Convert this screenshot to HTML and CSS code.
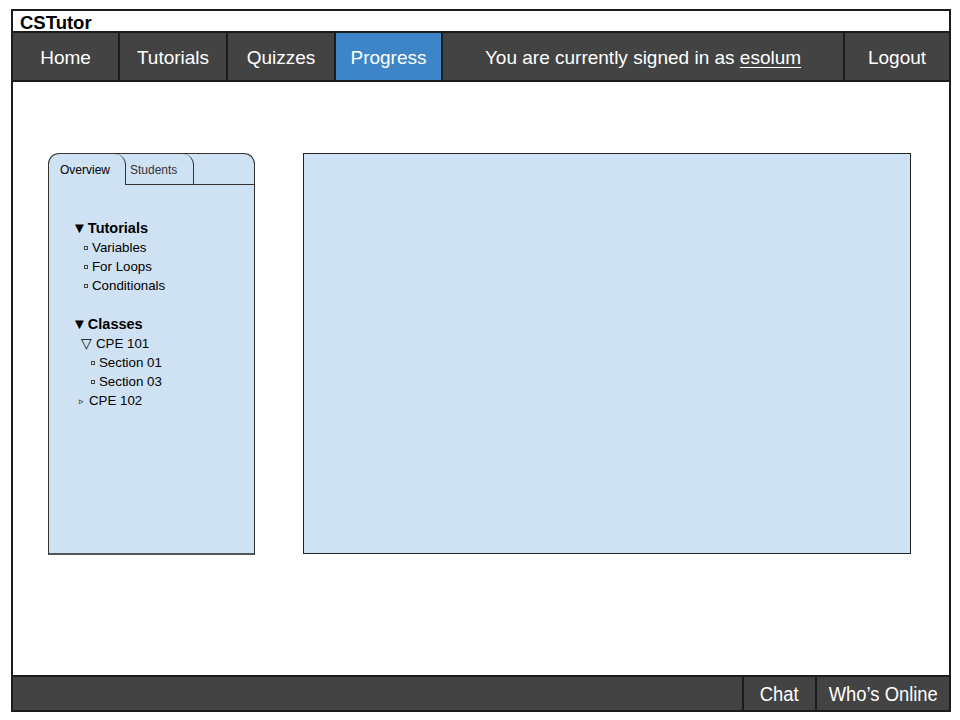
FILE: index.html
```html
<!DOCTYPE html>
<html lang="en">
<head>
    <meta charset="UTF-8">
    <title>CSTutor</title>
    <link rel="stylesheet" href="styles.css">
</head>
<body>
    <div class="frame">
        <div class="title">CSTutor</div>

        <div class="nav">
            <div class="nav-item nav-home">Home</div>
            <div class="nav-item nav-tut">Tutorials</div>
            <div class="nav-item nav-quiz">Quizzes</div>
            <div class="nav-item nav-prog active">Progress</div>
            <div class="nav-item nav-user">You are currently signed in as <u>esolum</u></div>
            <div class="nav-item nav-logout">Logout</div>
        </div>

        <div class="content">
            <div class="side-panel">
                <div class="tabs">
                    <div class="tab tab-active">Overview</div>
                    <div class="tab tab-other">Students</div>
                    <div class="tab-fill"></div>
                </div>

                <div class="tree">
                    <div class="tree-head"><span class="down">&#9660;</span>Tutorials</div>
                    <div class="leaf lvl1"><span class="sq"></span>Variables</div>
                    <div class="leaf lvl1"><span class="sq"></span>For Loops</div>
                    <div class="leaf lvl1"><span class="sq"></span>Conditionals</div>

                    <div class="tree-head head-gap"><span class="down">&#9660;</span>Classes</div>
                    <div class="node open"><span class="open-tri">&#9661;</span>CPE 101</div>
                    <div class="leaf lvl2"><span class="sq"></span>Section 01</div>
                    <div class="leaf lvl2"><span class="sq"></span>Section 03</div>
                    <div class="node closed"><span class="tri">&#9657;</span>CPE 102</div>
                </div>
            </div>

            <div class="main-panel"></div>
        </div>

        <div class="footer">
            <div class="foot-spacer"></div>
            <div class="foot-item foot-chat"><span class="narrow">Chat</span></div>
            <div class="foot-item foot-online"><span class="narrow">Who&rsquo;s Online</span></div>
        </div>
    </div>
</body>
</html>
```

FILE: styles.css
```css
* {
    margin: 0;
    padding: 0;
    box-sizing: border-box;
}

body {
    font-family: 'Liberation Sans', Arial, sans-serif;
    background: #fff;
    color: #000;
    width: 960px;
    height: 720px;
    overflow: hidden;
}

.frame {
    position: relative;
    margin: 9px 0 0 11px;
    width: 940px;
    height: 703px;
    border: 2px solid #1c1c1c;
    display: flex;
    flex-direction: column;
}

.title {
    height: 22px;
    padding-left: 7px;
    font-size: 18.5px;
    font-weight: bold;
    line-height: 23px;
    border-bottom: 2px solid #1c1c1c;
}

.nav {
    display: flex;
    height: 49px;
    background: #434343;
    border-bottom: 2px solid #1c1c1c;
}

.nav-item {
    color: #fff;
    font-size: 19px;
    line-height: 50px;
    text-align: center;
    border-right: 2px solid #1c1c1c;
}

.nav-home { width: 107px; }
.nav-tut { width: 108px; }
.nav-quiz { width: 108px; }
.nav-prog { width: 107px; }
.nav-user { width: 402px; }
.nav-logout { flex: 1; border-right: none; }

.nav-item.active {
    background: #3d85c6;
}

.nav-user u {
    text-decoration-thickness: 1px;
    text-underline-offset: 3px;
}

.content {
    flex: 1;
    display: flex;
    padding: 71px 0 0 35px;
    gap: 48px;
}

.side-panel {
    width: 207px;
    height: 402px;
    background: #cfe2f3;
    border: 1px solid #333;
    border-bottom: 2px solid #555;
    border-radius: 11px 11px 0 0;
    overflow: hidden;
}

.tabs {
    display: flex;
    height: 31px;
}

.tab {
    font-size: 12px;
    line-height: 33px;
    border-right: 1px solid #333;
    border-radius: 0 11px 0 0;
}

.tab-active {
    width: 77px;
    padding-left: 11px;
}

.tab-other {
    width: 68px;
    padding-left: 4px;
    color: #333;
    border-bottom: 1px solid #333;
}

.tab-fill {
    flex: 1;
    border-bottom: 1px solid #333;
}

.tree {
    padding: 33px 0 0 26px;
    font-size: 13.3px;
}

.tree-head {
    font-size: 14.5px;
    font-weight: bold;
    line-height: 20px;
    margin-left: -3px;
}

.down {
    font-size: 15px;
    margin-right: 1px;
}

.head-gap {
    margin-top: 19px;
}

.leaf, .node {
    line-height: 19px;
}

.lvl1 { padding-left: 9px; }
.lvl2 { padding-left: 16px; }
.open { padding-left: 6px; }
.closed { padding-left: 4px; }

.open-tri {
    font-size: 14px;
    margin-right: 4px;
}

.sq {
    display: inline-block;
    width: 4px;
    height: 4px;
    border: 1px solid #444;
    margin-right: 4px;
    vertical-align: 2px;
}

.tri {
    font-size: 9px;
    margin-right: 5px;
    vertical-align: 1px;
}

.main-panel {
    width: 608px;
    height: 401px;
    background: #cfe2f3;
    border: 1px solid #222;
}

.footer {
    display: flex;
    height: 35px;
    background: #434343;
    border-top: 2px solid #1c1c1c;
}

.foot-spacer {
    flex: 1;
}

.foot-item {
    color: #fff;
    font-size: 20px;
    line-height: 34px;
    text-align: center;
    border-left: 2px solid #1c1c1c;
}

.foot-chat { width: 73px; }
.foot-online { width: 134px; }

.narrow {
    display: inline-block;
    transform: scaleX(0.92);
}
```
